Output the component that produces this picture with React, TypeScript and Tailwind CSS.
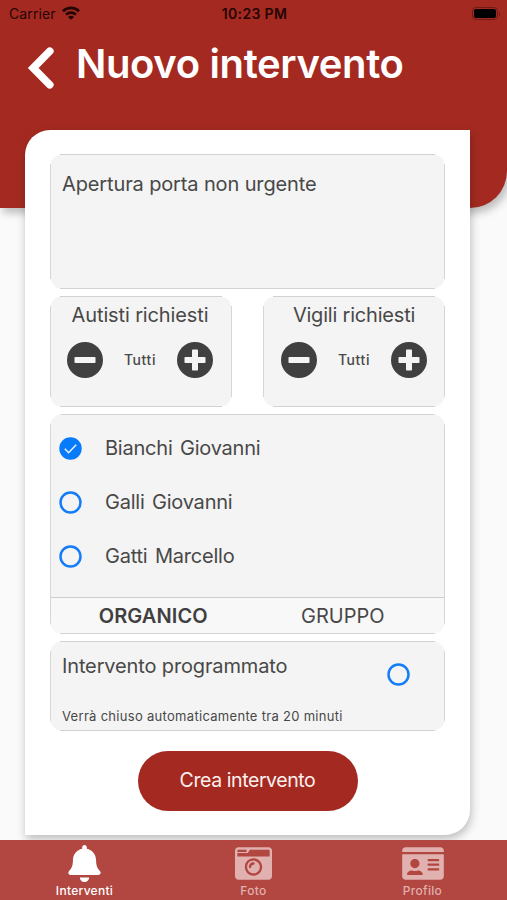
import React from 'react';
import { FaBell, FaCameraRetro, FaIdCard } from 'react-icons/fa';
import { clsx } from 'clsx';

interface PanelProps {
  className?: string;
  children: React.ReactNode;
}

// Grey rounded box, hairlines only run along the straight edges
function Panel({ className, children }: PanelProps) {
  return (
    <div
      className={clsx(
        'relative rounded-[13px] bg-[#f4f4f4]',
        "before:pointer-events-none before:absolute before:inset-x-[10px] before:inset-y-0 before:border-y before:border-[#d2d2d2] before:content-['']",
        "after:pointer-events-none after:absolute after:inset-x-0 after:inset-y-[10px] after:border-x after:border-[#d6d6d6] after:content-['']",
        className
      )}
    >
      {children}
    </div>
  );
}

function StatusBar() {
  return (
    <div className="grid h-[27px] grid-cols-3 items-center pl-[9px] pr-[7px] text-[14px] text-[#250504]">
      <div className="flex items-center gap-[6px]">
        <span className="tracking-[0.1px]">Carrier</span>
        <svg
          className="-mt-[2px]"
          width="18"
          height="14"
          viewBox="0 0 18 14"
          fill="none"
          stroke="currentColor"
          strokeWidth="2.7"
        >
          <path d="M1 5.2a11.4 11.4 0 0 1 16 0" />
          <path d="M4 8.6a7.2 7.2 0 0 1 10 0" />
          <path d="M9 13.8 6 10.9a4.2 4.2 0 0 1 6 0z" fill="currentColor" stroke="none" />
        </svg>
      </div>
      <span className="text-center font-semibold tracking-[0.35px] whitespace-nowrap">10:23 PM</span>
      <div className="flex items-center justify-end gap-px">
        <div className="h-[13px] w-[26px] rounded-[4px] border border-[#701b16] p-[1px]">
          <div className="h-full rounded-[2px] bg-black" />
        </div>
        <div className="h-[4px] w-[1.5px] rounded-r bg-[#701b16]" />
      </div>
    </div>
  );
}

function RoundButton({ plus }: { plus?: boolean }) {
  return (
    <button>
      <svg className="block" width="36" height="36" viewBox="0 0 36 36">
        <circle cx="18" cy="18" r="18" fill="#404040" />
        <rect x="7.5" y="15" width="21" height="6" rx="0.8" fill="#f4f4f4" />
        {plus && <rect x="15" y="7.5" width="6" height="21" rx="0.8" fill="#f4f4f4" />}
      </svg>
    </button>
  );
}

interface CounterProps {
  label: string;
  className?: string;
  labelClassName?: string;
}

function Counter({ label, className, labelClassName }: CounterProps) {
  return (
    <Panel className={clsx('h-[111px] w-[182px] pt-[6px]', className)}>
      <p className={clsx('text-center text-[20px] leading-[26px]', labelClassName)}>{label}</p>
      <div className="mt-[14px] flex items-center justify-between">
        <RoundButton />
        <span className="-mt-[2px] text-[14px] font-medium tracking-[0.6px]">Tutti</span>
        <RoundButton plus />
      </div>
    </Panel>
  );
}

function Radio({ checked }: { checked?: boolean }) {
  return (
    <svg className="block" width="23" height="23" viewBox="0 0 23 23" fill="none">
      {checked ? (
        <>
          <circle cx="11.5" cy="11.5" r="11.2" fill="#087bfa" />
          <path d="m5.8 11.8 3.8 3.9 7.6-7.9" stroke="#eaf4ff" strokeWidth="1.5" />
        </>
      ) : (
        <circle cx="11.5" cy="11.5" r="10" stroke="#157df8" strokeWidth="2.5" />
      )}
    </svg>
  );
}

const people = [
  { name: 'Bianchi Giovanni', checked: true },
  { name: 'Galli Giovanni', checked: false },
  { name: 'Gatti Marcello', checked: false },
];

const tabs = [
  { label: 'Interventi', icon: FaBell, active: true, iconClass: 'h-[37px] w-[37px]' },
  { label: 'Foto', icon: FaCameraRetro, active: false, iconClass: '-mt-[0.5px] mb-[0.5px] h-[37px] w-[37px]' },
  { label: 'Profilo', icon: FaIdCard, active: false, iconClass: '-mt-[0.5px] mb-[0.5px] h-[37px] w-[42px]' },
];

export default function App() {
  return (
    <div className="flex h-[900px] w-[507px] flex-col overflow-hidden bg-[#fafafa] font-['Inter',sans-serif] text-[#484848]">
      <header className="h-[208px] shrink-0 rounded-br-[37px] bg-[#a42a21] shadow-[3px_5px_9px_rgba(0,0,0,0.25)]">
        <StatusBar />
        <div className="flex items-start pl-[27px] text-white">
          <svg className="mt-[19px]" width="27" height="44" viewBox="0 0 27 44" fill="none">
            <path
              d="M22.8 5.2 6.2 22l16.6 16.8"
              stroke="currentColor"
              strokeWidth="7.6"
              strokeLinecap="round"
              strokeLinejoin="miter"
            />
          </svg>
          <h1 className="ml-[22px] mt-[12px] text-[40px] leading-[50px] font-semibold tracking-[-0.37px] whitespace-nowrap">
            Nuovo intervento
          </h1>
        </div>
      </header>

      <main className="relative mx-[25px] -mt-[78px] mb-[5px] h-[705px] w-[445px] shrink-0 rounded-tl-[25px] rounded-br-[25px] bg-white px-[25px] pt-[24px] shadow-[1px_4px_10px_rgba(0,0,0,0.25)]">
        <Panel className="h-[135px] px-[12px] pt-[17px]">
          <p className="text-[20px] leading-[26px] tracking-[-0.13px] whitespace-nowrap">
            Apertura porta non urgente
          </p>
        </Panel>

        <div className="mt-[7px] flex justify-between">
          <Counter label="Autisti richiesti" className="pl-[17px] pr-[19px]" labelClassName="tracking-[-0.13px]" />
          <Counter label="Vigili richiesti" className="pl-[18px] pr-[18px]" labelClassName="tracking-[-0.2px]" />
        </div>

        <Panel className="mt-[7px] flex h-[220px] flex-col overflow-hidden">
          <ul className="flex-1 pt-[7px]">
            {people.map((p) => (
              <li key={p.name} className="flex h-[54px] items-center gap-[23px] pl-[9px]">
                <Radio checked={p.checked} />
                <span className="text-[20px] tracking-[-0.22px] [word-spacing:2px]">{p.name}</span>
              </li>
            ))}
          </ul>
          <div className="grid h-[37px] grid-cols-2 items-center border-t border-[#cdcdcd] bg-[#f8f8f8] text-center text-[20px]">
            <span className="pl-[9px] font-semibold tracking-[0.1px] text-[#404040]">ORGANICO</span>
            <span className="pr-[7px]">GRUPPO</span>
          </div>
        </Panel>

        <Panel className="mt-[7px] flex h-[90px] justify-between pl-[12px] pr-[35px]">
          <div className="whitespace-nowrap">
            <p className="mt-[12px] text-[20px] leading-[26px] tracking-[-0.14px]">Intervento programmato</p>
            <p className="mt-[28px] text-[13px] leading-[18px] tracking-[0.3px]">
              Verrà chiuso automaticamente tra 20 minuti
            </p>
          </div>
          <div className="mt-[21.5px]">
            <Radio />
          </div>
        </Panel>

        <button className="mx-auto mt-[20px] flex h-[60px] w-[220px] items-center justify-center rounded-[32px] bg-[#a42a21] text-[19.5px] tracking-[-0.42px] text-[#fdf0ee]">
          Crea intervento
        </button>
      </main>

      <nav className="relative grid h-[60px] shrink-0 grid-cols-3 bg-[#b24640]">
        {tabs.map(({ label, icon: Icon, active, iconClass }) => (
          <div
            key={label}
            className={clsx(
              'flex flex-col items-center pt-[5px] text-[12px] leading-[18px] font-medium tracking-[0.3px]',
              active ? 'text-white' : 'text-[#e0b1ae]'
            )}
          >
            <Icon className={iconClass} />
            <span>{label}</span>
          </div>
        ))}
      </nav>
    </div>
  );
}
